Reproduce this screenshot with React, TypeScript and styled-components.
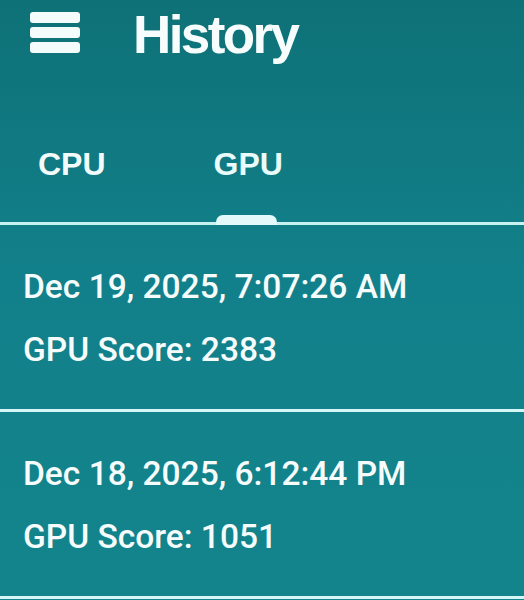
import styled, { createGlobalStyle } from 'styled-components';

const GlobalStyle = createGlobalStyle`
	html, body {
		margin: 0;
		padding: 0;
		background: #13838a;
	}
	body {
		font-family: Roboto, 'Liberation Sans', Arial, sans-serif;
		color: #fff;
	}
`;

const Screen = styled.div`
	width: 524px;
	min-height: 600px;
	background: linear-gradient(#0e7177, #12808a 45%, #13848c);
	overflow: hidden;
`;

const TopBar = styled.header`
	display: flex;
	align-items: flex-start;
	gap: 53px;
	height: 66px;
	padding: 8px 0 0 30px;
`;

const MenuButton = styled.button`
	display: flex;
	margin-top: 4px;
	padding: 0;
	border: none;
	background: transparent;
	color: #f4fbfb;
	cursor: pointer;

	svg {
		display: block;
		width: 50px;
		height: 42px;
	}
`;

const Title = styled.h1`
	margin: 0;
	font-family: 'Liberation Sans', Arial, sans-serif;
	font-size: 53px;
	font-weight: 700;
	letter-spacing: -2.6px;
	color: #f7fdfd;
	line-height: 1;
`;

const TabBar = styled.nav`
	display: flex;
	gap: 108px;
	padding: 74px 0 0 38px;
	border-bottom: 3px solid #c6f2f2;
`;

const Tab = styled.button<{ $active?: boolean }>`
	position: relative;
	padding: 0 0 42px;
	border: none;
	background: transparent;
	font-family: 'Liberation Sans', Arial, sans-serif;
	font-size: 32px;
	font-weight: 700;
	line-height: 1;
	color: ${(p) => (p.$active ? '#e9fbfb' : '#f4fbfb')};
	cursor: pointer;

	&::after {
		content: '';
		display: ${(p) => (p.$active ? 'block' : 'none')};
		position: absolute;
		left: 2px;
		right: 6px;
		bottom: -3px;
		height: 10px;
		border-radius: 7px 7px 0 0;
		background: #e4fafa;
	}
`;

const List = styled.ul`
	list-style: none;
	margin: 0;
	padding: 0;
`;

const Row = styled.li`
	display: flex;
	flex-direction: column;
	gap: 23px;
	padding: 42px 23px 39px;
	border-bottom: 3px solid #d4f6f6;
`;

const Line = styled.div`
	font-size: 33.5px;
	font-weight: 500;
	line-height: 40px;
	color: #f6fcfc;
	white-space: nowrap;
`;

const history = [
	{ date: 'Dec 19, 2025, 7:07:26 AM', score: 2383 },
	{ date: 'Dec 18, 2025, 6:12:44 PM', score: 1051 },
];

function App() {
	return (
		<>
			<GlobalStyle />
			<Screen>
				<TopBar>
					<MenuButton aria-label="menu">
						<svg viewBox="0 0 50 42" fill="currentColor">
							<rect x="0" y="0" width="50" height="11" rx="3" />
							<rect x="0" y="15" width="50" height="11" rx="3" />
							<rect x="0" y="30" width="50" height="11" rx="3" />
						</svg>
					</MenuButton>
					<Title>History</Title>
				</TopBar>
				<TabBar>
					<Tab>CPU</Tab>
					<Tab $active>GPU</Tab>
				</TabBar>
				<List>
					{history.map((item) => (
						<Row key={item.date}>
							<Line>{item.date}</Line>
							<Line>GPU Score: {item.score}</Line>
						</Row>
					))}
				</List>
			</Screen>
		</>
	);
}

export default App;
